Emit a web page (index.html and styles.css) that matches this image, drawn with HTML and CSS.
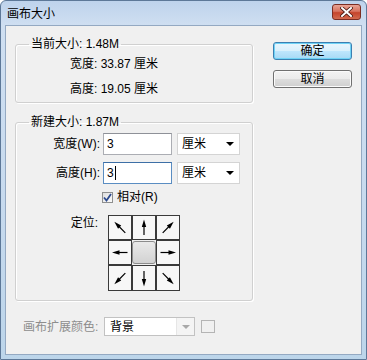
FILE: index.html
```html
<!DOCTYPE html>
<html>
<head>
<meta charset="utf-8">
<link rel="stylesheet" href="styles.css">
</head>
<body>
<div class="window">
  <div class="titlebar">
    <span class="title">画布大小</span>
    <span class="close">
      <svg width="13" height="10" viewBox="0 0 13 10"><path d="M2 1 L11 9 M11 1 L2 9" stroke="#4a1a12" stroke-width="3.6" stroke-linecap="square"/><path d="M2 1 L11 9 M11 1 L2 9" stroke="#ffffff" stroke-width="2" stroke-linecap="square"/></svg>
    </span>
  </div>
  <div class="panel">
    <div class="left">
      <fieldset class="group g1">
        <legend>当前大小: 1.48M</legend>
        <div class="info">宽度: 33.87 厘米</div>
        <div class="info">高度: 19.05 厘米</div>
      </fieldset>
      <fieldset class="group g2">
        <legend>新建大小: 1.87M</legend>
        <div class="field first">
          <span class="lbl">宽度(W):</span>
          <div class="input">3</div>
          <div class="select">厘米<i class="caret"></i></div>
        </div>
        <div class="field">
          <span class="lbl">高度(H):</span>
          <div class="input focus">3<i class="cursor"></i></div>
          <div class="select">厘米<i class="caret"></i></div>
        </div>
        <div class="check-row">
          <span class="checkbox"><svg width="9" height="9" viewBox="0 0 9 9"><path d="M1 4.5 L3.5 7.5 L8 1" fill="none" stroke="#2c4a8e" stroke-width="1.8"/></svg></span>
          <span class="check-label">相对(R)</span>
        </div>
        <div class="anchor-row">
          <span class="anchor-lbl">定位:</span>
          <div class="anchor-grid">
            <div class="cell"><svg width="22" height="23" viewBox="0 0 22 23"><g transform="rotate(-45 11 11.5)"><line x1="11" y1="19" x2="11" y2="8" stroke="#000" stroke-width="1.2"/><polygon points="11,3.5 8.8,11 13.2,11" fill="#000"/></g></svg></div>
            <div class="cell"><svg width="22" height="23" viewBox="0 0 22 23"><g><line x1="11" y1="19" x2="11" y2="8" stroke="#000" stroke-width="1.2"/><polygon points="11,3.5 8.8,11 13.2,11" fill="#000"/></g></svg></div>
            <div class="cell"><svg width="22" height="23" viewBox="0 0 22 23"><g transform="rotate(45 11 11.5)"><line x1="11" y1="19" x2="11" y2="8" stroke="#000" stroke-width="1.2"/><polygon points="11,3.5 8.8,11 13.2,11" fill="#000"/></g></svg></div>
            <div class="cell"><svg width="22" height="23" viewBox="0 0 22 23"><g transform="rotate(-90 11 11.5)"><line x1="11" y1="19" x2="11" y2="8" stroke="#000" stroke-width="1.2"/><polygon points="11,3.5 8.8,11 13.2,11" fill="#000"/></g></svg></div>
            <div class="cell center"></div>
            <div class="cell"><svg width="22" height="23" viewBox="0 0 22 23"><g transform="rotate(90 11 11.5)"><line x1="11" y1="19" x2="11" y2="8" stroke="#000" stroke-width="1.2"/><polygon points="11,3.5 8.8,11 13.2,11" fill="#000"/></g></svg></div>
            <div class="cell"><svg width="22" height="23" viewBox="0 0 22 23"><g transform="rotate(-135 11 11.5)"><line x1="11" y1="19" x2="11" y2="8" stroke="#000" stroke-width="1.2"/><polygon points="11,3.5 8.8,11 13.2,11" fill="#000"/></g></svg></div>
            <div class="cell"><svg width="22" height="23" viewBox="0 0 22 23"><g transform="rotate(180 11 11.5)"><line x1="11" y1="19" x2="11" y2="8" stroke="#000" stroke-width="1.2"/><polygon points="11,3.5 8.8,11 13.2,11" fill="#000"/></g></svg></div>
            <div class="cell"><svg width="22" height="23" viewBox="0 0 22 23"><g transform="rotate(135 11 11.5)"><line x1="11" y1="19" x2="11" y2="8" stroke="#000" stroke-width="1.2"/><polygon points="11,3.5 8.8,11 13.2,11" fill="#000"/></g></svg></div>
          </div>
        </div>
      </fieldset>
      <div class="ext-row">
        <span class="ext-lbl">画布扩展颜色:</span>
        <div class="ext-select"><span class="ext-text">背景</span><span class="ext-btn"><i class="caret dim"></i></span></div>
        <span class="swatch"></span>
      </div>
    </div>
    <div class="right">
      <div class="btn default">确定</div>
      <div class="btn">取消</div>
    </div>
  </div>
</div>
</body>
</html>
```

FILE: styles.css
```css
* { box-sizing: border-box; }
html, body { margin: 0; padding: 0; }
body {
  width: 367px;
  height: 360px;
  overflow: hidden;
  font-family: "Liberation Sans", "Noto Sans CJK SC", sans-serif;
  font-size: 12px;
  color: #000;
  background: #fff;
}
.window {
  width: 367px;
  height: 360px;
  border: 1px solid #5d7898;
  border-radius: 6px 6px 0 0;
  background: linear-gradient(to bottom, #bed3ec 0px, #cfdff1 24px, #c7daee 200px, #bcd5ea 360px);
  display: flex;
  flex-direction: column;
}
.titlebar {
  height: 24px;
  flex: none;
  display: flex;
  align-items: center;
  justify-content: space-between;
  padding: 0 5px 0 6px;
}
.title {
  line-height: 16px;
  color: #000;
  margin-top: 1px;
}
.close {
  width: 29px;
  height: 16px;
  margin-top: -3px;
  border: 1px solid #7b2d22;
  border-radius: 3px;
  background: linear-gradient(to bottom, #e8a495 0%, #d8735f 45%, #c5442b 55%, #d26a4f 100%);
  display: flex;
  align-items: center;
  justify-content: center;
}
.close svg { display: block; }
.panel {
  flex: 1;
  margin: 0 4px 4px 4px;
  border: 1px solid #94a9c2;
  background: #f0f0f0;
  padding: 11px 0 0 9px;
  display: flex;
  gap: 20px;
}
.left {
  width: 238px;
  flex: none;
  display: flex;
  flex-direction: column;
}
.group {
  margin: 0;
  border: 1px solid #d0d0d0;
  border-radius: 3px;
  width: 238px;
  min-width: 0;
  box-shadow: inset 1px 1px 0 #fff, 1px 1px 0 #fff;
}
.group legend {
  margin-left: 13px;
  padding: 0 2px;
  line-height: 14px;
  height: 14px;
}
.g1 {
  padding: 1px 0 0 0;
}
.info {
  line-height: 25px;
  height: 25px;
  padding-left: 54px;
}
.g2 {
  margin-top: 12px;
  padding: 4px 0 9px 0;
}
.field {
  display: flex;
  align-items: center;
  height: 22px;
  margin-top: 7px;
}
.field.first { margin-top: 0; }
.lbl {
  width: 84px;
  text-align: right;
  line-height: 16px;
}
.input {
  margin-left: 3px;
  width: 69px;
  height: 22px;
  background: #fff;
  border: 1px solid #abadb3;
  border-top-color: #8e9198;
  padding-left: 3px;
  line-height: 20px;
  display: flex;
  align-items: center;
}
.input.focus {
  border-color: #5a8dc2;
  border-top-color: #3d6fa6;
}
.cursor {
  display: inline-block;
  width: 1px;
  height: 14px;
  background: #000;
  margin-left: 1px;
}
.select {
  margin-left: 5px;
  width: 63px;
  height: 22px;
  background: #fff;
  border: 1px solid #d4d4d4;
  padding-left: 4px;
  display: flex;
  align-items: center;
  justify-content: space-between;
  padding-right: 5px;
  line-height: 16px;
}
.caret {
  display: block;
  width: 0;
  height: 0;
  border-left: 4px solid transparent;
  border-right: 4px solid transparent;
  border-top: 4px solid #000;
}
.caret.dim { border-top-color: #a8a8a8; }
.check-row {
  margin-top: 6px;
  height: 14px;
  display: flex;
  align-items: center;
  padding-left: 86px;
}
.checkbox {
  width: 11px;
  height: 11px;
  border: 1px solid #8e8f8f;
  background: linear-gradient(135deg, #dedede, #fbfbfb);
  display: flex;
  align-items: center;
  justify-content: center;
}
.checkbox svg { display: block; }
.check-label {
  margin-left: 4px;
  line-height: 14px;
}
.anchor-row {
  margin-top: 11px;
  display: flex;
  align-items: flex-start;
}
.anchor-lbl {
  width: 82px;
  text-align: right;
  line-height: 16px;
}
.anchor-grid {
  margin-left: 10px;
  display: grid;
  grid-template-columns: 24px 24px 24px;
  grid-template-rows: 25px 25px 26px;
}
.cell {
  border: 1px solid #3a3a3a;
  background: #f7f7f7;
  display: flex;
  align-items: center;
  justify-content: center;
}
.cell svg { display: block; }
.cell.center {
  border: 1px solid #8c8c8c;
  border-radius: 3px;
  background: linear-gradient(to bottom, #e9e9e9, #d2d2d2);
  margin: 1px 0;
}
.ext-row {
  margin-top: 16px;
  display: flex;
  align-items: center;
  height: 19px;
}
.ext-lbl {
  margin-left: 8px;
  width: 81px;
  color: #8d8d8d;
  line-height: 16px;
}
.ext-select {
  width: 91px;
  height: 19px;
  border: 1px solid #c2c2c2;
  background: #fff;
  display: flex;
  align-items: center;
}
.ext-text {
  flex: 1;
  padding-left: 5px;
  line-height: 16px;
}
.ext-btn {
  width: 18px;
  height: 17px;
  background: #f4f4f4;
  border-left: 1px solid #e6e6e6;
  display: flex;
  align-items: center;
  justify-content: center;
}
.swatch {
  margin-left: 6px;
  width: 14px;
  height: 13px;
  border: 1px solid #b4b4b4;
  background: #f0f0f0;
}
.right {
  padding-top: 5px;
  display: flex;
  flex-direction: column;
  gap: 10px;
}
.btn {
  width: 79px;
  height: 18px;
  border: 1px solid #707070;
  border-radius: 3px;
  background: linear-gradient(to bottom, #f3f3f3 0%, #ebebeb 50%, #dddddd 51%, #cfcfcf 100%);
  text-align: center;
  line-height: 16px;
  box-shadow: inset 0 0 0 1px #fbfbfb;
}
.btn.default {
  border-color: #3c7fb1;
  background: linear-gradient(to bottom, #eaf6fd 0%, #d9f0fc 50%, #bee6fd 51%, #a7d9f5 100%);
  box-shadow: inset 0 0 0 1px #6fd3f6;
}
```
